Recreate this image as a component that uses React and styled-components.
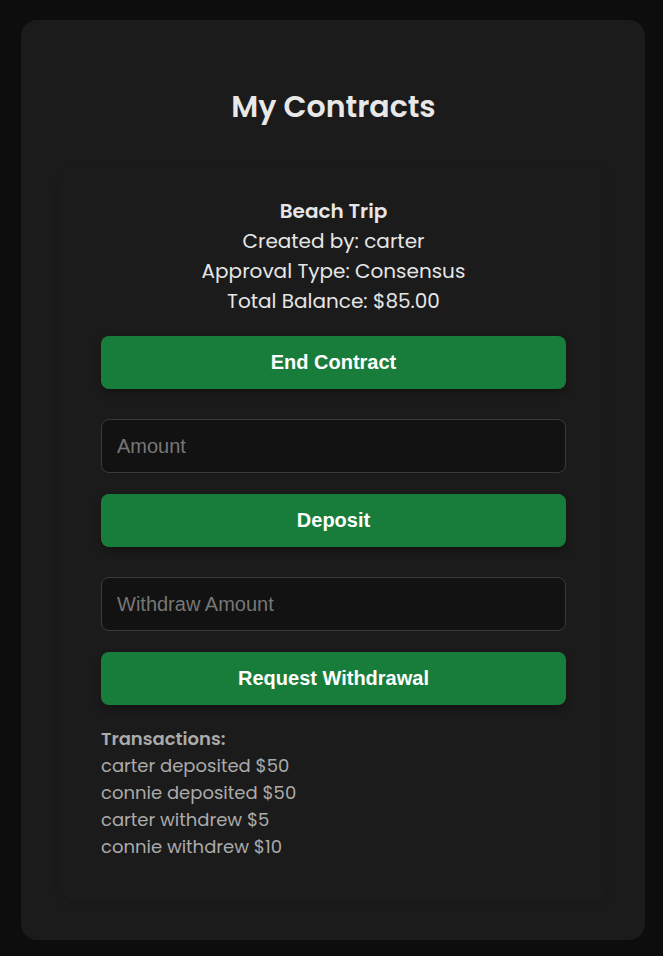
import React from 'react';
import styled, { createGlobalStyle } from 'styled-components';

const GlobalStyle = createGlobalStyle`
  * { box-sizing: border-box; }
  html, body {
    margin: 0;
    padding: 0;
    background: #0d0d0d;
  }
  body {
    font-family: 'Poppins', 'DejaVu Sans', sans-serif;
    color: #e8e8e8;
  }
`;

const Page = styled.div`
  padding: 20px 18px 16px 21px;
  min-height: 956px;
`;

const Shell = styled.div`
  background: #1b1b1b;
  border-radius: 16px;
  padding: 64px 38px 39px 39px;
  display: flex;
  flex-direction: column;
  align-items: center;
`;

const Title = styled.h2`
  margin: 0 0 36px;
  font-size: 30px;
  font-weight: 600;
  line-height: 45px;
  color: #e8e8e8;
`;

const ContractCard = styled.div`
  width: 100%;
  background: #1b1b1b;
  border-radius: 16px;
  box-shadow: 0 4px 8px rgba(0, 0, 0, 0.1);
  padding: 31px 41px 41px;
  display: flex;
  flex-direction: column;
`;

const Info = styled.div`
  text-align: center;
  margin-bottom: 20px;
`;

const InfoLine = styled.p`
  margin: 0;
  font-size: 20px;
  line-height: 30px;
  font-weight: ${props => props.bold ? 600 : 400};
  color: #e6e6e6;
`;

const Button = styled.button`
  height: 53px;
  width: 100%;
  border: none;
  border-radius: 8px;
  background: #187d3a;
  color: #ffffff;
  font-family: 'Liberation Sans', Arial, sans-serif;
  font-size: 20px;
  font-weight: 700;
  box-shadow: 0 4px 8px rgba(0, 0, 0, 0.3);
  cursor: pointer;
  margin-bottom: ${props => props.last ? '20px' : '30px'};
`;

const Input = styled.input`
  height: 54px;
  width: 100%;
  border: 1px solid #3a3a3a;
  border-radius: 8px;
  background: #121212;
  color: #e8e8e8;
  padding: 0 15px;
  font-family: 'Liberation Sans', Arial, sans-serif;
  font-size: 20px;
  margin-bottom: 21px;
  outline: none;

  &::placeholder {
    color: #777777;
  }
`;

const Transactions = styled.div`
  color: #ababab;
`;

const TxHeading = styled.div`
  font-size: 18px;
  font-weight: 600;
  line-height: 27px;
`;

const TxLine = styled.div`
  font-size: 18px;
  line-height: 27px;
`;

const contract = {
  name: 'Beach Trip',
  creator: 'carter',
  approval: 'Consensus',
  balance: '$85.00',
  transactions: [
    'carter deposited $50',
    'connie deposited $50',
    'carter withdrew $5',
    'connie withdrew $10',
  ],
};

export default function App() {
  return (
    <Page>
      <GlobalStyle />
      <Shell>
        <Title>My Contracts</Title>
        <ContractCard>
          <Info>
            <InfoLine bold>{contract.name}</InfoLine>
            <InfoLine>Created by: {contract.creator}</InfoLine>
            <InfoLine>Approval Type: {contract.approval}</InfoLine>
            <InfoLine>Total Balance: {contract.balance}</InfoLine>
          </Info>
          <Button>End Contract</Button>
          <Input placeholder="Amount" />
          <Button>Deposit</Button>
          <Input placeholder="Withdraw Amount" />
          <Button last>Request Withdrawal</Button>
          <Transactions>
            <TxHeading>Transactions:</TxHeading>
            {contract.transactions.map(t => (
              <TxLine key={t}>{t}</TxLine>
            ))}
          </Transactions>
        </ContractCard>
      </Shell>
    </Page>
  );
}
